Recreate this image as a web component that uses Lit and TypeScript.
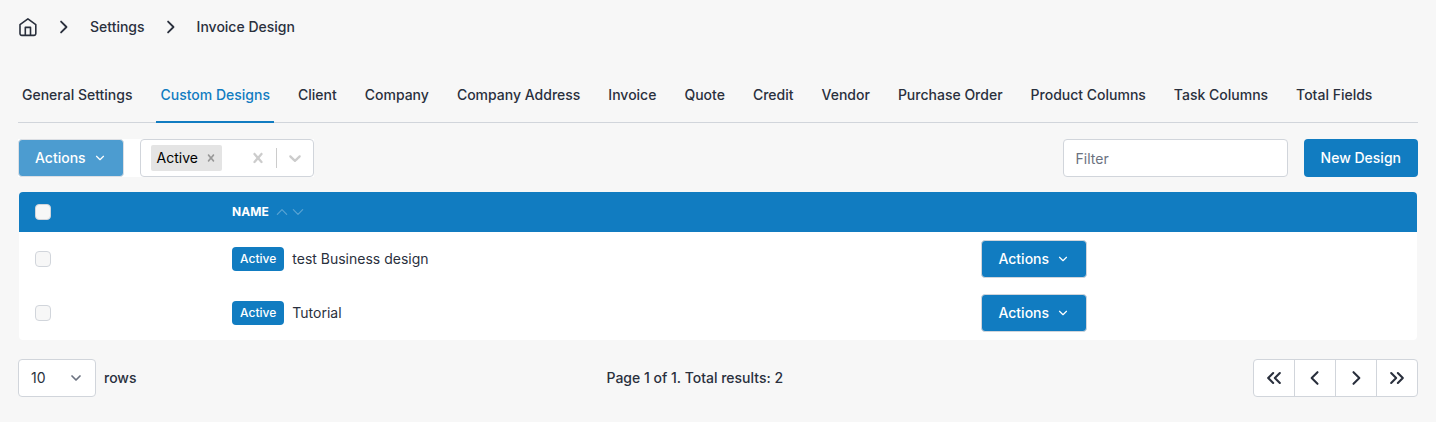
import { LitElement, html, css, svg } from "lit";
import { customElement, property, state } from "lit/decorators.js";

const stroke = (d: string, size: number, width: number) => html`
  <svg
    width=${size}
    height=${size}
    viewBox="0 0 24 24"
    fill="none"
    stroke="currentColor"
    stroke-width=${width}
    stroke-linecap="round"
    stroke-linejoin="round"
    aria-hidden="true"
  >
    ${svg`<path d=${d}></path>`}
  </svg>
`;

const CRUMB = "M8.5 5.5l6.5 6.5-6.5 6.5";
const CHEVRON_DOWN = "M6 9l6 6 6-6";
const SORT_UP = "M5 15.5l7-7 7 7";
const SORT_DOWN = "M5 8.5l7 7 7-7";
const LEFT = "M15 5l-7 7 7 7";
const RIGHT = "M9 5l7 7-7 7";
const FIRST = "M11 6l-6 6 6 6M19 6l-6 6 6 6";
const LAST = "M13 6l6 6-6 6M5 6l6 6-6 6";

const CROSS =
  "M14.348 14.849c-0.469 0.469-1.229 0.469-1.697 0l-2.651-3.030-2.651 3.029c-0.469 0.469-1.229 0.469-1.697 0-0.469-0.469-0.469-1.229 0-1.697l2.758-3.15-2.759-3.152c-0.469-0.469-0.469-1.228 0-1.697s1.228-0.469 1.697 0l2.652 3.031 2.651-3.031c0.469-0.469 1.228-0.469 1.697 0s0.469 1.229 0 1.697l-2.758 3.152 2.758 3.15c0.469 0.469 0.469 1.229 0 1.698z";
const SOLID_CHEVRON =
  "M4.516 7.548c0.436-0.446 1.043-0.481 1.576 0l3.908 3.747 3.908-3.747c0.533-0.481 1.141-0.446 1.574 0 0.436 0.445 0.408 1.197 0 1.615-0.406 0.418-4.695 4.502-4.695 4.502-0.217 0.223-0.502 0.335-0.787 0.335s-0.57-0.112-0.789-0.335c0 0-4.287-4.084-4.695-4.502s-0.436-1.17 0-1.615z";

const solid = (d: string, size: number) => html`
  <svg width=${size} height=${size} viewBox="0 0 20 20" fill="currentColor" aria-hidden="true">
    ${svg`<path d=${d}></path>`}
  </svg>
`;

const base = css`
  :host,
  * {
    box-sizing: border-box;
  }
  svg {
    display: block;
    flex: none;
  }
  button,
  input,
  select {
    font: inherit;
    margin: 0;
  }
  button {
    cursor: pointer;
  }
`;

@customElement("actions-button")
export class ActionsButton extends LitElement {
  @property({ type: Boolean, reflect: true }) muted = false;

  static styles = [
    base,
    css`
      :host {
        display: inline-flex;
        vertical-align: top;
      }
      .button {
        display: flex;
        align-items: center;
        gap: 7px;
        height: 38px;
        padding: 0 16px;
        border: 1px solid #d1d5db;
        border-radius: 4px;
        background: #117cc1;
        color: #fff;
        font-weight: 500;
      }
      .muted {
        opacity: 0.75;
      }
    `,
  ];

  render() {
    return html`
      <button type="button" class="button ${this.muted ? "muted" : ""}" ?disabled=${this.muted}>
        Actions ${stroke(CHEVRON_DOWN, 14, 2)}
      </button>
    `;
  }
}

@customElement("app-root")
export class AppRoot extends LitElement {
  @state() private tab = "Custom Designs";

  private tabs = [
    "General Settings",
    "Custom Designs",
    "Client",
    "Company",
    "Company Address",
    "Invoice",
    "Quote",
    "Credit",
    "Vendor",
    "Purchase Order",
    "Product Columns",
    "Task Columns",
    "Total Fields",
  ];

  private designs = ["test Business design", "Tutorial"];

  static styles = [
    base,
    css`
      :host {
        display: block;
        min-height: 100vh;
        padding: 16px 18px 24px;
        background: #f7f7f7;
        color: #2a303d;
        font-family: Inter, "Liberation Sans", sans-serif;
        font-size: 14px;
        line-height: 20px;
      }
      a {
        color: inherit;
        text-decoration: none;
      }
      .crumbs {
        display: flex;
        align-items: center;
        gap: 16px;
        height: 22px;
        font-weight: 500;
      }
      .tabs {
        display: flex;
        gap: 20px;
        margin-top: 38px;
        border-bottom: 1px solid #d1d5db;
        font-weight: 500;
        white-space: nowrap;
      }
      .tab {
        padding: 9px 4px 16px;
        margin-bottom: -1px;
        border-bottom: 2px solid transparent;
      }
      .tab.current {
        color: #117cc1;
        border-color: #117cc1;
      }
      .toolbar {
        display: flex;
        justify-content: space-between;
        margin: 16px 0 15px;
      }
      .group {
        display: flex;
        gap: 16px;
      }
      .filters {
        background: #fff;
      }
      .multi {
        display: flex;
        align-items: center;
        width: 174px;
        height: 38px;
        padding-left: 10px;
        border: 1px solid #d1d5db;
        border-radius: 4px;
        background: #fff;
        color: #ccc;
      }
      .chip {
        display: flex;
        align-items: center;
        height: 26px;
        padding-left: 6px;
        border-radius: 2px;
        background: #e4e4e4;
        color: #000;
      }
      .plain {
        display: flex;
        padding: 0;
        border: 0;
        background: none;
        color: inherit;
      }
      .chip .plain {
        padding: 0 4px 0 6px;
        color: #999;
      }
      .search {
        flex: 1;
        min-width: 0;
        padding: 0;
        border: 0;
        outline: 0;
        background: none;
      }
      .multi > .plain {
        padding: 0 8px;
      }
      .bar {
        width: 1px;
        height: 20px;
        background: #ccc;
      }
      .filter {
        width: 225px;
        height: 38px;
        padding: 8px 12px;
        border: 1px solid #d1d5db;
        border-radius: 4px;
        background: #fff;
        color: inherit;
      }
      .filter::placeholder {
        color: #6b7280;
      }
      .primary {
        height: 38px;
        padding: 0 17px;
        border: 0;
        border-radius: 4px;
        background: #117cc1;
        color: #fff;
        font-weight: 500;
      }
      .card {
        margin: 0 1px;
        border-radius: 4px;
        overflow: hidden;
        background: #fff;
      }
      .table {
        width: 100%;
        table-layout: fixed;
        border-collapse: collapse;
      }
      .table th,
      .table td {
        padding: 0 16px;
        text-align: left;
      }
      .table th {
        height: 40px;
        background: #117cc1;
        color: #fff;
        font-size: 12px;
        font-weight: 700;
      }
      .table td {
        height: 54px;
      }
      .pick {
        width: 14.1%;
      }
      .act {
        width: 32.3%;
      }
      .line {
        display: flex;
        align-items: center;
        gap: 8px;
      }
      .sort {
        display: flex;
        align-items: center;
        gap: 5px;
        padding: 0;
        border: 0;
        background: none;
        color: inherit;
      }
      .arrows {
        display: flex;
        opacity: 0.3;
      }
      .check {
        display: block;
        appearance: none;
        width: 16px;
        height: 16px;
        border: 1px solid #d1d5db;
        border-radius: 4px;
        background: #f7f7f7;
      }
      .badge {
        padding: 2px 8px;
        border-radius: 4px;
        background: #117cc1;
        color: #fff;
        font-size: 12px;
        font-weight: 500;
      }
      .footer {
        display: flex;
        align-items: center;
        justify-content: space-between;
        margin-top: 19px;
        font-weight: 500;
      }
      .rows {
        display: flex;
        align-items: center;
        gap: 8px;
      }
      .drop {
        display: grid;
        align-items: center;
        width: 78px;
      }
      .drop > * {
        grid-area: 1 / 1;
      }
      .drop select {
        appearance: none;
        height: 38px;
        padding: 0 12px;
        border: 1px solid #d1d5db;
        border-radius: 4px;
        background: #fff;
        color: inherit;
        font-weight: 400;
      }
      .drop svg {
        justify-self: end;
        margin-right: 12px;
        color: #6b7280;
        pointer-events: none;
      }
      .pager {
        display: flex;
        border: 1px solid #d1d5db;
        border-radius: 4px;
        background: #fff;
        overflow: hidden;
      }
      .page {
        display: grid;
        place-items: center;
        width: 41px;
        height: 36px;
        padding: 0;
        border: 0;
        background: none;
        color: inherit;
      }
      .page:not(:last-child) {
        border-right: 1px solid #d1d5db;
      }
      .page:last-child {
        width: 40px;
      }
    `,
  ];

  private home() {
    return html`
      <svg width="20" height="20" viewBox="0 0 20 20" fill="none" stroke="currentColor" stroke-width="1.6" stroke-linejoin="round" stroke-linecap="round" aria-hidden="true">
        <path d="M9.9 1.9L2 7.6V16.6a1.8 1.8 0 0 0 1.8 1.8H16a1.8 1.8 0 0 0 1.8-1.8V7.6Z"></path>
        <path d="M7.3 18V10.4H12.5V18"></path>
      </svg>
    `;
  }

  render() {
    return html`
      <nav class="crumbs" aria-label="Breadcrumb">
        <a href="#home" aria-label="Home">${this.home()}</a>
        ${stroke(CRUMB, 20, 2.2)}
        <a href="#settings">Settings</a>
        ${stroke(CRUMB, 20, 2.2)}
        <a href="#invoice-design">Invoice Design</a>
      </nav>

      <nav class="tabs" aria-label="Sections">
        ${this.tabs.map(
          (name) => html`<a
            href="#${name.toLowerCase().replace(/ /g, "-")}"
            class="tab ${name === this.tab ? "current" : ""}"
            @click=${() => (this.tab = name)}
            >${name}</a
          >`
        )}
      </nav>

      <div class="toolbar">
        <div class="group filters">
          <actions-button muted></actions-button>
          <div class="multi">
            <span class="chip"
              >Active<button type="button" class="plain" aria-label="Remove Active">
                ${solid(CROSS, 14)}
              </button></span
            >
            <input class="search" role="combobox" aria-label="Status" aria-expanded="false" />
            <button type="button" class="plain" aria-label="Clear">${solid(CROSS, 20)}</button>
            <span class="bar"></span>
            <button type="button" class="plain" aria-label="Open">${solid(SOLID_CHEVRON, 20)}</button>
          </div>
        </div>
        <div class="group">
          <input class="filter" type="text" placeholder="Filter" aria-label="Filter" />
          <button type="button" class="primary">New Design</button>
        </div>
      </div>

      <div class="card">
        <table class="table">
          <thead>
            <tr>
              <th class="pick"><input class="check" type="checkbox" aria-label="Select all" /></th>
              <th>
                <button type="button" class="sort">
                  NAME
                  <span class="arrows">${stroke(SORT_UP, 16, 1.8)}${stroke(SORT_DOWN, 16, 1.8)}</span>
                </button>
              </th>
              <th class="act"></th>
            </tr>
          </thead>
          <tbody>
            ${this.designs.map(
              (name) => html`
                <tr>
                  <td><input class="check" type="checkbox" aria-label="Select ${name}" /></td>
                  <td>
                    <div class="line"><span class="badge">Active</span><span>${name}</span></div>
                  </td>
                  <td><actions-button></actions-button></td>
                </tr>
              `
            )}
          </tbody>
        </table>
      </div>

      <div class="footer">
        <div class="rows">
          <div class="drop">
            <select id="rows">
              <option>10</option>
              <option>50</option>
              <option>100</option>
            </select>
            ${stroke(CHEVRON_DOWN, 16, 2.6)}
          </div>
          <label for="rows">rows</label>
        </div>
        <span>Page 1 of 1. Total results: 2</span>
        <div class="pager">
          <button type="button" class="page" aria-label="First page">${stroke(FIRST, 20, 2.5)}</button>
          <button type="button" class="page" aria-label="Previous page">${stroke(LEFT, 20, 2.5)}</button>
          <button type="button" class="page" aria-label="Next page">${stroke(RIGHT, 20, 2.5)}</button>
          <button type="button" class="page" aria-label="Last page">${stroke(LAST, 20, 2.5)}</button>
        </div>
      </div>
    `;
  }
}
